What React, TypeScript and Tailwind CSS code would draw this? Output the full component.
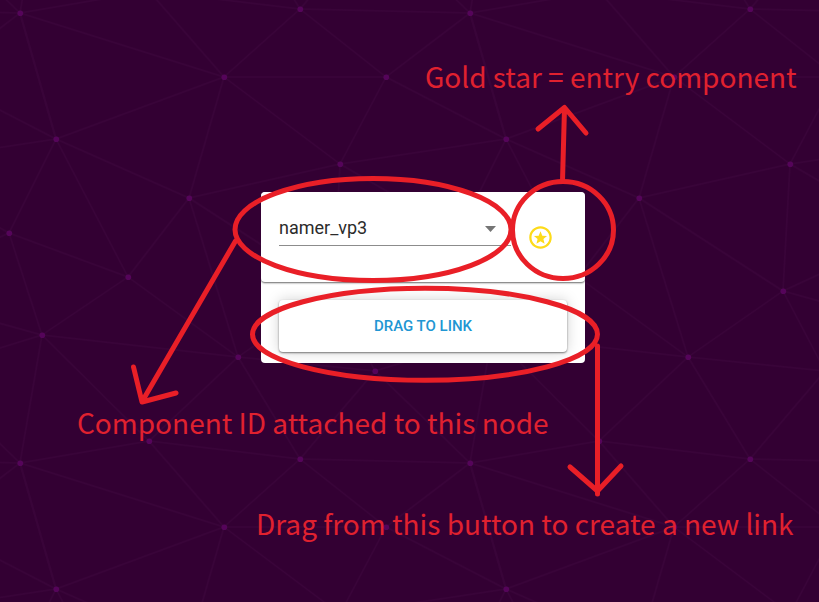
import { useState } from "react";

type Point = [number, number];

// The backdrop repeats every 450px in both directions.
const TILE = 450;

const stars: Point[] = [
  [20, 13], [224, 77], [56, 139], [189, 198], [300, 9], [386, 77], [340, 164],
  [9, 233], [128, 277], [42, 335], [238, 357], [375, 371], [149, 441], [333, 291],
];

const strands: [Point, Point][] = [
  [[20, 13], [56, 139]], [[20, 13], [224, 77]], [[470, 13], [300, 9]],
  [[470, 13], [386, 77]], [[20, 463], [149, 441]], [[224, 77], [56, 139]],
  [[224, 77], [189, 198]], [[224, 77], [386, 77]], [[224, 527], [149, 441]],
  [[224, 77], [340, 164]], [[224, 77], [300, 9]], [[300, 9], [386, 77]],
  [[56, 139], [189, 198]], [[56, 139], [9, 233]], [[56, 139], [128, 277]],
  [[506, 139], [340, 164]], [[506, 139], [386, 77]], [[470, 13], [506, 139]],
  [[386, 77], [340, 164]], [[189, 198], [340, 164]], [[189, 198], [128, 277]],
  [[189, 198], [238, 357]], [[9, 233], [128, 277]], [[9, 233], [42, 335]],
  [[42, 335], [128, 277]], [[42, 335], [238, 357]], [[238, 357], [128, 277]],
  [[42, 335], [20, 463]], [[42, 335], [149, 441]], [[238, 357], [149, 441]],
  [[238, 357], [300, 459]], [[149, 441], [300, 459]], [[375, 371], [300, 459]],
  [[375, 371], [470, 463]], [[333, 291], [340, 164]], [[333, 291], [492, 335]],
  [[333, 291], [375, 371]], [[333, 291], [238, 357]], [[333, 291], [459, 233]],
  [[333, 291], [189, 198]], [[340, 164], [459, 233]], [[492, 335], [375, 371]],
  [[238, 357], [375, 371]],
];

const shifts: Point[] = [
  [0, 0], [-TILE, 0], [0, -TILE], [-TILE, -TILE],
];

function Backdrop() {
  return (
    <svg className="absolute inset-0 h-full w-full" aria-hidden="true">
      <defs>
        <pattern id="web" width={TILE} height={TILE} patternUnits="userSpaceOnUse">
          {shifts.map(([dx, dy]) => (
            <g key={`${dx},${dy}`} transform={`translate(${dx} ${dy})`}>
              {strands.map(([a, b], i) => (
                <line key={i} x1={a[0]} y1={a[1]} x2={b[0]} y2={b[1]} stroke="#390439" strokeWidth="1.5" />
              ))}
            </g>
          ))}
          {stars.map(([x, y]) => (
            <circle key={`${x},${y}`} cx={x + 0.3} cy={y + 0.3} r="2.8" fill="#55045a" />
          ))}
        </pattern>
      </defs>
      <rect width="100%" height="100%" fill="url(#web)" />
    </svg>
  );
}

function EntryStar() {
  return (
    <svg className="size-[27px]" viewBox="0 0 24 24" fill="#fddb1a" aria-hidden="true">
      <path d="M11.99 2C6.47 2 2 6.48 2 12s4.47 10 9.99 10C17.52 22 22 17.52 22 12S17.52 2 11.99 2zM12 20c-4.42 0-8-3.58-8-8s3.58-8 8-8 8 3.58 8 8-3.58 8-8 8z" />
      <path d="M12 6.500l1.600 3.900 4.200.3-3.200 2.700 1 4.100-3.600-2.200-3.600 2.200 1-4.100-3.200-2.700 4.200-.3z" />
    </svg>
  );
}

function NodeCard() {
  const [component, setComponent] = useState("namer_vp3");
  return (
    <section className="absolute top-[192px] left-[261px] w-[324px] overflow-hidden rounded bg-white font-['Roboto',sans-serif]">
      <div className="flex gap-4 rounded bg-white px-[18px] pt-[18px] pb-9 shadow-[0_1px_2px_rgba(0,0,0,0.6)]">
        <div className="relative w-[232px]">
          <select
            aria-label="Component"
            value={component}
            onChange={(e) => setComponent(e.target.value)}
            className="block h-9 w-full appearance-none border-b border-[#8c8c8c] bg-transparent text-lg text-[#2b2b2b] outline-none"
          >
            <option>namer_vp3</option>
          </select>
          <svg className="pointer-events-none absolute top-4 right-[15px] h-[6px] w-[11px]" viewBox="0 0 10 5" preserveAspectRatio="none" aria-hidden="true">
            <path d="M0 0h10L5 5z" fill="#757575" />
          </svg>
        </div>
        <button type="button" aria-label="Entry component" className="-mb-[18px]">
          <EntryStar />
        </button>
      </div>
      <div className="px-[18px] pt-[18px] pb-[11px]">
        <button
          type="button"
          className="block h-[52px] w-full rounded bg-white text-[15px] font-medium text-[#2196d3] shadow-[0_1px_2px_rgba(0,0,0,0.5),0_0_14px_rgba(0,0,0,0.18)]"
        >
          DRAG TO LINK
        </button>
      </div>
    </section>
  );
}

function Markings() {
  return (
    <svg
      className="pointer-events-none absolute inset-0 h-full w-full"
      fill="none"
      stroke="#e91f27"
      strokeWidth="5"
      strokeLinecap="round"
      strokeLinejoin="round"
      aria-hidden="true"
    >
      <ellipse cx="373" cy="229.5" rx="138" ry="51" />
      <ellipse cx="563" cy="230" rx="50.5" ry="48.5" />
      <ellipse cx="425" cy="334.3" rx="172.5" ry="46" />
      <path d="M562.5 181L564.5 108M538 129L564.5 107.500L586 133" />
      <path d="M235.500 241L143 400M133.500 367L142 402L176 393" />
      <path d="M597.500 346V494M570 467L597.500 491L621 466" />
    </svg>
  );
}

function Note({ className, children }: { className: string; children: string }) {
  return (
    <p className={`absolute text-[28px] leading-9 whitespace-nowrap text-[#e0212f] font-['Noto_Sans_CJK_SC',sans-serif] ${className}`}>
      {children}
    </p>
  );
}

export default function App() {
  return (
    <main className="relative h-screen overflow-hidden bg-[#330033]">
      <Backdrop />
      <NodeCard />
      <Markings />
      <Note className="top-[58px] left-[425px]">Gold star = entry component</Note>
      <Note className="top-[404px] left-[77px]">Component ID attached to this node</Note>
      <Note className="top-[505px] left-[256px]">Drag from this button to create a new link</Note>
    </main>
  );
}
